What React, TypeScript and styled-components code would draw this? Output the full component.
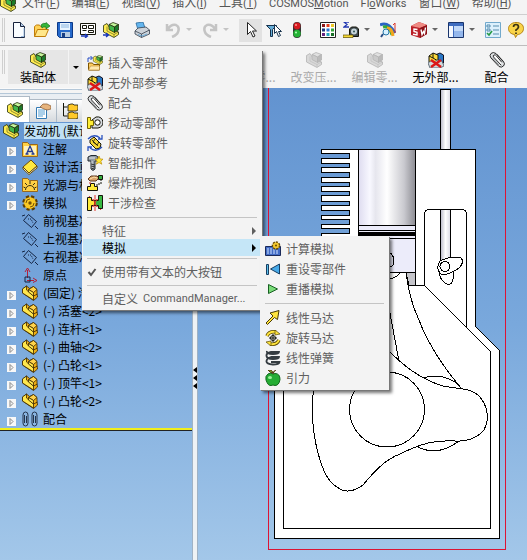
import React from 'react';
import styled, { createGlobalStyle } from 'styled-components';

const GlobalStyle = createGlobalStyle`
  * { box-sizing: border-box; }
  html, body { margin: 0; }
  body, button {
    font: 12px/16px "Noto Sans CJK SC", "Noto Sans", sans-serif;
    color: #000;
  }
  button { margin: 0; padding: 0; border: 0; background: none; white-space: nowrap; }
  svg { display: block; flex: none; }
`;

/* ---------- icons ---------- */

const K = '#15150a';
const Y = '#ffec50';
const G = '#43b84a';

function Block({ body = Y, cube = G, light = '#c4f59c', line = '#26300c', dark = '#1b7a2a' }: { body?: string; cube?: string; light?: string; line?: string; dark?: string }) {
  return (
    <g stroke={line} strokeWidth=".8" strokeLinejoin="round">
      <path d="M.5 3.500L4 1.500l2.500 4 9 4.500v2.500L11 15.500.5 10z" fill={body} />
      <path d="M4 4.500v4.500l7 3.500v2.500M11 12.500l4.500-2.500" fill="none" strokeWidth=".5" />
      <path d="M6 2.500l4-2 5.500 2-4 2.500z" fill={light} />
      <path d="M6 2.500l5.500 2.500v5.500L6 7.500z" fill={cube} />
      <path d="M11.500 5l4-2.500V8l-4 2.500z" fill={dark} />
    </g>
  );
}

const art: Record<string, React.ReactNode> = {
  assembly: <Block />,
  part: (
    <g stroke="#3a2600" strokeWidth=".8" strokeLinejoin="round">
      <path d="M.5 4l4-3 3 2.500 4-2 3.500 3v4l.5 3.500-4 3.500L.5 8z" fill="#efae14" />
      <path d="M.5 4L4.500 1v4l7 6v4L.5 8z" fill="#ffe74d" />
      <path d="M6.500 4.500l5-3 3.500 3-3.500 3z" fill="#ffd34a" />
      <path d="M6.500 4.500V7l5 4V7.500z" fill="#ffe74d" />
      <path d="M11.500 11l4-2" fill="none" />
    </g>
  ),
  ghost: <Block body="#d8d8d8" cube="#cacaca" light="#e0e0e0" line="#b4b4b4" dark="#bababa" />,
  newDoc: (
    <g>
      <path d="M2.500.5h7l4 4v11h-11z" fill="#fafdff" stroke="#17223c" />
      <path d="M9.500.5v4h4" fill="#b4cce8" stroke="#17223c" />
      <path d="M10 14.500h3V6" stroke="#9cbce0" fill="none" />
    </g>
  ),
  open: (
    <g strokeLinejoin="round">
      <path d="M.5 14.500v-10l2-1.500h3l1 1.500h6v3" fill="#ffd257" stroke="#c07d08" />
      <path d="M.5 14.500l3-7h11l-3 7z" fill="#ffe78a" stroke="#c07d08" />
      <path d="M7 3q2-2.500 5-1.500V.5L16 4l-4 3V5q-3-.5-4 1z" fill="#35b63b" stroke="#16751d" strokeWidth=".7" />
    </g>
  ),
  save: (
    <g>
      <path d="M.5.5h15v15h-13l-2-2z" fill="#2569cb" stroke="#0b3886" />
      <path d="M3 1h10v7H3z" fill="#e9f4ff" />
      <path d="M4 3h8M4 5h8" stroke="#8cb6e0" />
      <path d="M4 10h9v5H4z" fill="#b7cce4" />
      <path d="M5 11h3v4H5z" fill="#173d84" />
    </g>
  ),
  drawing: (
    <g fill="none" stroke={K}>
      <path d="M.5 1.500h15v11H.5z" fill="#fff" />
      <path d="M2.500 3.500h4v3h-4zM8.500 3.500h5v3h-5zM2.500 8.500h4M8.500 8.500h5v2h-5z" />
      <path d="M1 14h6M5 12l2.500 2L5 16" stroke="#1735b8" strokeWidth="1.300" />
    </g>
  ),
  assemblyFrom: (
    <g>
      <Block />
      <path d="M0 13h5M3 11l2.500 2L3 15" stroke="#1735b8" strokeWidth="1.300" fill="none" />
    </g>
  ),
  print: (
    <g stroke="#35404e" strokeWidth=".8" strokeLinejoin="round">
      <path d="M2 1l7-1 2 6-7 2z" fill="#63b5ee" stroke="#2a6799" />
      <path d="M1 9l3-3 8-1 3.500 3v4l-8 3.500L1 12z" fill="#ccd2d9" />
      <path d="M1 9l6.500 3 8-4M7.500 12v3.500" fill="none" />
      <path d="M4 12.500l4 1.500 5-2" stroke="#58a4d9" fill="none" />
    </g>
  ),
  undo: <path d="M2 2v6h6M3 7q3-5 8-4 4 2 2 7-1 3-6 5" fill="none" stroke="#c4c4c4" strokeWidth="2.500" />,
  redo: <path d="M14 2v6H8M13 7Q10 2 5 3 1 5 3 10q1 3 6 5" fill="none" stroke="#c4c4c4" strokeWidth="2.500" />,
  cursor: <path d="M4.500.5v12l3-3 2.500 5.500 2-1-2.500-5h4z" fill="#fff" stroke="#222" />,
  filter: (
    <g stroke="#17324c">
      <path d="M.5 3.500h10l-4 4v7h-2v-7z" fill="#65add8" />
      <path d="M8.500 2.500v9l2-2 2 5 2-1-2-4h3z" fill="#fff" />
    </g>
  ),
  traffic: (
    <g>
      <rect x="4" y="0" width="8" height="16" rx="4" fill="#343434" />
      <circle cx="8" cy="4" r="3.400" fill="#d71920" /><circle cx="7" cy="3" r="1" fill="#ff9a8d" />
      <circle cx="8" cy="11.500" r="3.700" fill="#24b235" /><circle cx="7" cy="10.500" r="1" fill="#b4ffb8" />
    </g>
  ),
  palette: (
    <g>
      <path d="M.5.5h15v15H.5z" fill="#fff" stroke="#222" />
      <path d="M2 2h3v3H2z" fill="#8d1818" /><path d="M6.500 2h3v3h-3z" fill="#e33e1c" /><path d="M11 2h3v3h-3z" fill="#efc825" />
      <path d="M2 6.500h3v3H2z" fill="#1b377d" /><path d="M6.500 6.500h3v3h-3z" fill="#2873ce" /><path d="M11 6.500h3v3h-3z" fill="#33a43b" />
      <path d="M2 11h3v3H2z" fill="#652180" /><path d="M6.500 11h3v3h-3z" fill="#21a2bb" /><path d="M11 11h3v3h-3z" fill="#187027" />
    </g>
  ),
  measure: (
    <g>
      <path d="M6 0H1l3 2.500L1 5h5" fill="none" stroke="#2339b2" strokeWidth="1.300" />
      <path d="M6.500 14.500V7l2-2h5l2 2v7.500z" fill="#3e4a4e" stroke={K} />
      <circle cx="11" cy="9.500" r="3" fill="#c7d5da" /><circle cx="11" cy="9.500" r="1" fill="#355" />
      <path d="M0 13h10v2.500H0z" fill="#f6da38" stroke="#5b4b00" strokeWidth=".7" />
    </g>
  ),
  check: (
    <g fill="none">
      <path d="M0 3q8-4 15 8" stroke="#2b65c4" strokeWidth="3" />
      <path d="M3 5q7-2 9 8" stroke="#33aa3a" strokeWidth="3" />
      <path d="M7 6q5 0 6 8" stroke="#f1a51d" strokeWidth="3" />
      <path d="M15 1v10M13 3l2-2" stroke="#d7352b" />
      <circle cx="6" cy="10" r="3" fill="#d8f1ff" stroke="#2777a9" />
      <path d="M3 12l-2 3" stroke="#284c83" strokeWidth="2" />
    </g>
  ),
  sw: (
    <g>
      <path d="M0 4l8-4 8 3v9l-7 4-9-3z" fill="#b91e26" />
      <path d="M0 4l8-4 8 3-7 3z" fill="#ef8a83" />
      <path d="M9 6l7-3v9l-7 4z" fill="#8d1016" />
      <path d="M6.500 7.500L3 7v2.500l3 .8V13l-4-.7M10 7.500l1 5 1.500-3 1 2 1-6" fill="none" stroke="#fff" strokeWidth="1.400" />
    </g>
  ),
  panel: (
    <g>
      <path d="M.5.5h15v15H.5z" fill="#c2d9f8" stroke="#19346c" />
      <path d="M1 1h14v3H1z" fill="#3f6dc0" /><path d="M1 4h4v11H1z" fill="#f4f8ff" />
      <path d="M5.500 4v11" stroke="#3f6dc0" /><path d="M6 9h9v6H6z" fill="#94b7ec" />
    </g>
  ),
  list: (
    <g fill="none">
      <path d="M.5.5h15v15H.5z" fill="#dcf0fc" stroke="#72a9cc" />
      <path d="M2 3h3v2H2zM2 7h3v2H2z" stroke="#548bad" /><path d="M8 4h6M8 8h6M8 12h6" stroke="#568dac" />
      <path d="M2 11l2 2 3-4" stroke="#269a45" strokeWidth="1.600" />
    </g>
  ),
  help: (
    <g>
      <path d="M8 .5c5 0 7.500 2.500 7.500 6s-3 6-6 6l-2 3-1-3c-4-.5-6-3-6-6s3-6 7.500-6z" fill="#f9d449" stroke="#b58311" />
      <path d="M5.500 5q0-2.500 2.500-2.500T10.500 5Q10 7 8 8v1M8 10.500V12" fill="none" stroke="#3b3212" strokeWidth="1.700" />
    </g>
  ),
  insert: (
    <g>
      <path d="M1 7V3h4M3.500 1l2 2-2 2" stroke="#244bc3" fill="none" />
      <g transform="translate(6 0) scale(.62)"><Block /></g>
      <path d="M1.500 15V8h4l1 1.500h6V15z" fill="#ffcf63" stroke="#7e5500" />
      <path d="M1.500 15l2-4h9v4z" fill="#ffe9ae" stroke="#b88630" strokeWidth=".6" />
    </g>
  ),
  external: (
    <g>
      <path d="M7 3l5-2 3.500 2v8L11 14z" fill="#2977c5" stroke="#112" />
      <path d="M1 4l4-3 5 2v8l-5 2-4-3z" fill="#fcdb3d" stroke={K} />
      <path d="M5 1v5l5 3M1 4l4 2" stroke={K} fill="none" />
      <path d="M0 11l4-3 2 2 3-2 5 1 2 5-4 2H2z" fill="#d2d8dc" stroke="#304250" strokeWidth=".7" />
      <path d="M3 8l10 7M13 8L3 15" stroke="#dc1717" strokeWidth="2.500" />
    </g>
  ),
  clip: (
    <g fill="none" stroke="#2c2c2c" strokeLinecap="round">
      <path d="M14 9.500L7 1.500Q4-.5 2 1.500T2 6l8 8.500q2.500 1.500 4.500-.5t0-4.500L8 2.500" fill="#e0e3e5" />
      <path d="M12 13L4.500 5Q3.500 3.500 5 3t2.500 1l5 6" fill="#fff" />
      <path d="M9.500 12.500L3.500 6" stroke="#8b8f92" />
    </g>
  ),
  move: (
    <g stroke={K}>
      <path d="M5 5l4-3q6-1 7 5 0 5-5 6H5z" fill="#d5d9de" />
      <circle cx="10.500" cy="7.500" r="2.700" fill="#fff" />
      <path d="M.5 2.500h3v3h3v5h-3v3h-3z" fill="#ffee35" stroke="#756500" />
    </g>
  ),
  rotate: (
    <g>
      <path d="M3 5l4-3 7 7-1 4-4 1-6-6z" fill="#f6d636" stroke={K} /><path d="M5 5l6 6M8 4L6 7l4 3 2-3" fill="none" stroke={K} strokeWidth=".8" />
      <path d="M1 4q6-6 12-1M15 0v4h-4M15 12q-6 6-12 1M1 16v-4h4" fill="none" stroke="#2952be" strokeWidth="1.300" />
    </g>
  ),
  fastener: (
    <g>
      <path d="M1 2l3-1.500h5l2 1.500v4H8v8l-2 1.500L4 14V6H1z" fill="#929ba4" stroke="#222b33" />
      <path d="M5 6v8M2 3h6" stroke="#e4e8eb" /><path d="M4 9l4 1M4 11l4 1M4 13l3 1" stroke="#333" />
      <path d="M12 1l1.200 3 2.800.2-2.200 2 1 3L12 7.500l-2.600 1.700.8-3L8 4.200l2.800-.2z" fill="#ffe936" stroke="#bd8b00" strokeWidth=".7" />
    </g>
  ),
  explode: (
    <g>
      <path d="M1 4l3-3h6l2 2-3 3H3z" fill="#d9a268" stroke="#5d391e" />
      <path d="M3 4l4-2 3 1" fill="none" stroke="#ffe2ac" />
      <path d="M11.500.5h4v4h-4z" fill="#36ad3e" stroke={K} />
      <path d="M14 4v5h-4v3" stroke={K} strokeDasharray="2 1" fill="none" />
      <path d="M.5 15.500v-4h3v-3h4v3h3v4z" fill="#ffea38" stroke={K} />
      <path d="M3 7v2" stroke="#d42b24" />
    </g>
  ),
  interference: (
    <g>
      <path d="M2 1l12 14M14 1L2 15M8 0v16" stroke="#e5362b" />
      <path d="M.5 2.500h4v3h4v5h-4v5h-4z" fill="#ffeb39" stroke={K} />
      <path d="M15.500.5h-4v5h-4v5h4v3h4z" fill="#38b842" stroke={K} />
      <path d="M6 4l4 8M10 4l-4 8" stroke="#e5362b" />
    </g>
  ),
  property: (
    <g>
      <path d="M1.500 4.500h10v11h-10z" fill="#fff" stroke="#337ab4" /><path d="M3 7h7M3 9h7M3 11h7M3 13h5" stroke="#57a0d4" />
      <path d="M5 4l3-3h4l4 2v3l-4 1-3-1z" fill="#e7b47d" stroke="#85552b" strokeWidth=".7" />
    </g>
  ),
  config: (
    <g>
      <path d="M1.500 0v13h4M1.500 4h4" fill="none" stroke={K} />
      <path d="M6 2l3-1h2l1 1h4v5l-2 1H6zM6 10l3-1h2l1 1h4v5l-2 1H6z" fill="#ffc929" stroke={K} strokeWidth=".8" />
    </g>
  ),
  notes: (
    <g>
      <path d="M.5 15.500v-14h5l2 2h8v12z" fill="#ffd044" stroke="#98681c" /><path d="M2 5h12v9H2z" fill="#fff2bd" />
      <path d="M4.500 13L8 5l3.500 8M6 10.500h4M3.500 13h3M9.500 13h3" fill="none" stroke="#223a91" strokeWidth="1.300" />
    </g>
  ),
  binder: <g stroke="#6c4c05"><path d="M1 8l8-7 6 6-8 7z" fill="#ffe83f" /><path d="M1 8v2l6 5.500L15 9V7l-8 7z" fill="#fffbe4" /></g>,
  lights: (
    <g>
      <path d="M.5 14.500v-13h5l2 2h8v11z" fill="#ffd044" stroke="#98681c" />
      <path d="M3.500 13a4.500 4.500 0 019 0M8 4v3M3 6l2 2M13 6l-2 2M1.500 10l2 1M14.500 10l-2 1" fill="none" stroke="#332d16" />
    </g>
  ),
  gear: (
    <g>
      <circle cx="8" cy="8" r="6.300" fill="#e6ad17" stroke="#5a3c03" strokeWidth="3" strokeDasharray="3 2" />
      <circle cx="8" cy="8" r="5.800" fill="#fac923" /><path d="M4 8q0-4 4-4M12 8q0 4-4 4" stroke="#785309" fill="none" />
      <circle cx="8" cy="8" r="1.700" fill="#735007" />
    </g>
  ),
  plane: <g fill="none" stroke="#142443"><path d="M1.500 7.500l5-6 8 7-5 6zM0 3l3-1M13 13l3 3" /><path d="M6 6h3l2 4" strokeDasharray="1 1" /></g>,
  origin: <g fill="none" stroke="#b51e36"><path d="M5.500 3v8M3 5l2.500-4L8 5" /><path d="M5 13.500h7M11 11l4 2.500-4 2" /><path d="M3 10h5v5H3z" stroke="#142443" /></g>,
  mates: (
    <g fill="none" stroke="#24354d">
      <path d="M6 4v8q0 3-2.500 3T1 12V4q0-3 2.500-3T6 4zM4.500 5v7M2.500 12V4M15 4v8q0 3-2.500 3T10 12V4q0-3 2.500-3T15 4zM13.500 5v7M11.500 12V4" />
    </g>
  ),
  calculate: (
    <g>
      <path d="M.5 5.500h15v9h-15z" fill="#426bc5" stroke="#1a2958" /><path d="M2 8h8M2 10h12M2 12h12" stroke="#d0e4ff" strokeDasharray="2 1" />
      <circle cx="11" cy="4.500" r="3.300" fill="#f4c92f" stroke="#6a4c00" strokeWidth="2" strokeDasharray="2 1" />
      <circle cx="11" cy="4.500" r="2.800" fill="#f4c92f" /><circle cx="11" cy="4.500" r="1" fill="#6a4c00" />
    </g>
  ),
  reset: <g stroke="#173e63"><path d="M1.500 3.500h2v10h-2z" fill="#5bc0ea" /><path d="M14.500 3v10l-9-5z" fill="#46a9e8" /></g>,
  play: <path d="M3.500 3.500v9l9-4.500z" fill="#7adc78" stroke="#175f22" />,
  linearMotor: <path d="M1 13l7-7-3-3 9-2.500-1.500 9-3-2-7 7z" fill="#ffe43c" stroke="#493a04" strokeLinejoin="round" />,
  rotaryMotor: (
    <g fill="none">
      <path d="M2 6q2-5 9-4M14 10q-2 5-9 4" stroke="#5b4a00" strokeWidth="3.500" />
      <path d="M2 6q2-5 9-4M14 10q-2 5-9 4" stroke="#ffe43c" strokeWidth="2" />
      <path d="M10 0l5 4-5 1zM6 16l-5-4 5-1z" fill="#ffe43c" stroke="#5b4a00" strokeWidth=".7" />
      <circle cx="8" cy="8" r="2.500" fill="#fff" stroke={K} /><path d="M8 4v8M4 8h8" stroke={K} />
    </g>
  ),
  spring: (
    <g fill="none" stroke="#343b40" strokeWidth="1.800">
      <path d="M2 1q-1 3 6 3 6 0 6-2H6Q1 3 1.500 6T8 9q6 0 6-2H6q-4 1-4.500 4T8 14.500q6 0 6.500-2.500H6" />
    </g>
  ),
  apple: (
    <g>
      <path d="M8 4q-2-2-5 0Q0 6 1 10q2 6 5 5.500 2-1 4 0 4 0 5-6 0-6-5-6z" fill="#25ad34" stroke="#12681d" />
      <path d="M8 4q0-3 3-4M8 3Q5 3 3 0q4-1 5 3z" fill="#7b9d24" stroke="#553715" />
      <ellipse cx="5" cy="7.500" rx="2" ry="1.500" fill="#a0f39c" />
    </g>
  ),
};

const Icon = ({ name }: { name: string }) => (
  <svg width="16" height="16" viewBox="0 0 16 16" aria-hidden="true">{art[name]}</svg>
);

const Caret = ({ side }: { side?: boolean }) => (
  <svg width="6" height="8" viewBox="0 0 6 8" fill="currentColor" aria-hidden="true">
    <path d={side ? 'M1 0l4 4-4 4z' : 'M0 2h6L3 5z'} />
  </svg>
);

/* ---------- bars ---------- */

const Page = styled.div`
  position: relative;
  display: flex;
  flex-direction: column;
  min-height: 100vh;
  overflow: hidden;
  background: #f4f4f4;
`;

const Latin = styled.span`
  font-family: Roboto, sans-serif;
  font-size: 11px;
`;

const MenuBar = styled.nav`
  display: flex;
  align-items: flex-end;
  gap: 12px;
  height: 15px;
  padding-bottom: 2px;
  overflow: hidden;
  border-bottom: 1px solid #cfcfcf;
  & > svg { margin-right: -6px; }
`;

const MenuName = styled.button`
  flex: none;
  color: #555;
`;

const ToolBar = styled.div`
  display: flex;
  align-items: center;
  height: 31px;
  padding-left: 2px;
  border-bottom: 1px solid #bdbdbd;
`;

const Grip = styled.span`
  flex: none;
  width: 3px;
  height: 24px;
  margin-right: 2px;
  border: solid #cfcfcf;
  border-width: 0 1px;
`;

const ToolGroup = styled.div<{ $near?: boolean }>`
  display: flex;
  flex: none;
  margin-right: ${p => (p.$near ? 4 : 8)}px;
`;

const ToolButton = styled.button<{ $on?: boolean }>`
  display: grid;
  place-items: center;
  width: 23px;
  height: 23px;
  background: ${p => (p.$on ? '#e2e2e2' : 'none')};
`;

const DropButton = styled.button<{ $dim?: boolean }>`
  display: grid;
  place-items: center;
  width: 10px;
  color: ${p => (p.$dim ? '#c4c4c4' : '#666')};
`;

const CommandBar = styled.div`
  display: flex;
  height: 42px;
  padding: 4px 0 4px 2px;
`;

const CommandMain = styled.div`
  display: flex;
  flex: none;
  gap: 1px;
  margin-left: 1px;
`;

const CommandFace = styled.button<{ $width: number; $flat?: boolean }>`
  display: flex;
  flex-direction: column;
  align-items: center;
  justify-content: center;
  gap: 1px;
  flex: none;
  width: ${p => p.$width}px;
  padding-top: 2px;
  background: ${p => (p.$flat ? 'none' : '#e6e6e6')};
  &:disabled { color: #aaa; }
`;

const CommandList = styled.div`
  display: flex;
  flex: none;
  margin-left: auto;
`;

/* ---------- work area ---------- */

const Main = styled.main`
  display: flex;
  flex: 1;
  background: linear-gradient(#6293d0, #79a8dc 50%, #a3c7e9);
`;

const Side = styled.aside`
  flex: none;
  width: 192px;
`;

const Tabs = styled.div`
  display: flex;
  align-items: flex-end;
  height: 34px;
  padding-top: 8px;
  background: linear-gradient(#fafafa 1px, #b4c7d8 1px, #b4c7d8 2px, #f4f4f4 2px, #f4f4f4 5px, #b4c7d8 5px, #b4c7d8 6px, #e9eef3 6px);
`;

const Tab = styled.button<{ $on?: boolean }>`
  display: grid;
  place-items: center;
  width: ${p => (p.$on ? 30 : 27)}px;
  height: ${p => (p.$on ? 26 : 23)}px;
  border: solid #aebac6;
  border-width: 1px 1px 0 0;
  background: ${p => (p.$on ? '#fff' : 'linear-gradient(#fff, #d5d9dd)')};
`;

const Tree = styled.ul`
  margin: 0;
  padding: 0;
  list-style: none;
  border-bottom: 2px solid #f1ee1b;
  box-shadow: 0 1px #222;
`;

const Node = styled.li<{ $root?: boolean }>`
  display: flex;
  align-items: center;
  gap: 5px;
  height: 18px;
  padding-left: ${p => (p.$root ? 3 : 7)}px;
  white-space: nowrap;
`;

const NodeName = styled.span<{ $on?: boolean }>`
  flex: ${p => (p.$on ? 1 : 'none')};
  background: ${p => (p.$on ? '#bfe0f6' : 'none')};
`;

const Expander = styled.button<{ $none?: boolean }>`
  display: grid;
  place-items: center;
  visibility: ${p => (p.$none ? 'hidden' : 'visible')};
  width: 9px;
  height: 9px;
  margin: 4px 1px 0 0;
  background: #f8f8f8;
  color: #888;
`;

const Splitter = styled.div`
  display: flex;
  flex: none;
  flex-direction: column;
  justify-content: center;
  align-items: center;
  width: 6px;
  padding-top: 108px;
  border: solid #9fb2c5;
  border-width: 0 1px;
  background: #eef2f5;
`;

const Viewport = styled.section`
  flex: 1;
  min-width: 0;
  overflow: hidden;
`;

/* ---------- menus ---------- */

const Menu = styled.div<{ $sub?: boolean }>`
  position: absolute;
  left: ${p => (p.$sub ? 260 : 82)}px;
  top: ${p => (p.$sub ? 236 : 50)}px;
  width: ${p => (p.$sub ? 129 : 180)}px;
  padding: ${p => (p.$sub ? '3px 1px 2px' : '3px 1px 0')};
  background: #f3f3f3;
  box-shadow: 1px 1px 0 #777, 3px 3px 3px #0008;
`;

const Item = styled.button<{ $size?: 'short' | 'tall'; $plain?: boolean; $on?: boolean }>`
  display: flex;
  align-items: center;
  gap: 5px;
  width: 100%;
  height: ${p => (p.$size === 'short' ? 17 : p.$size === 'tall' ? 22 : 20)}px;
  padding: 0 4px 0 ${p => (p.$plain ? 19 : 4)}px;
  color: ${p => (p.$on ? '#000' : '#5f5f5f')};
  background: ${p => (p.$on ? '#c5e6f7' : 'none')};
  & > svg { margin-left: ${p => (p.$plain ? 'auto' : '0')}; }
`;

const Rule = styled.hr<{ $wide?: boolean }>`
  height: 1px;
  margin: ${p => (p.$wide ? '4px 4px' : '2px 4px')};
  border: 0;
  background: #c4c4c4;
`;

/* ---------- engine drawing ---------- */

const finGaps = [[153, 158], [163, 167], [172, 177], [182, 186], [191, 195], [201, 205], [210, 215], [219, 224], [228, 233]];
const finEdge = finGaps.map(([a, b]) => `V${a}.5H349.5V${b}.5H321.5`).join('');

const Engine = () => (
  <svg width="329" height="472" viewBox="198 88 329 472" role="img" aria-label="发动机">
    <defs>
      <linearGradient id="bore">
        <stop offset="0" stopColor="#dedcf0" /><stop offset=".2" stopColor="#f8f8ff" />
        <stop offset=".3" stopColor="#e6e6ee" /><stop offset=".5" stopColor="#fff" />
        <stop offset=".8" stopColor="#c9c9cf" /><stop offset="1" stopColor="#8c8c93" />
      </linearGradient>
      <linearGradient id="rod">
        <stop offset="0" stopColor="#b9b9c8" /><stop offset=".5" stopColor="#fff" /><stop offset="1" stopColor="#dcdce6" />
      </linearGradient>
    </defs>
    <g fill="none" stroke="#000" shapeRendering="crispEdges">
      <path d="M268.500 88V549.500H505.500V88" stroke="#dc1434" />
      <path d="M440.500 149V89.500h10V149" fill="url(#rod)" />
      <path d={`M321.500 149.500${finEdge}V240L274.500 300V538.500H499.500V350.500L475.500 326.500V149.500z`} fill="#fff" />
      <path d="M283.500 380V528.500H490.500V351.500L425 286" />
      <path d="M358.500 149.500h57v76h-57z" fill="url(#bore)" />
      <path d="M358.500 225.500h57v47h-57z" fill="#ececfa" />
      <path d="M359 230.500h56M359 232.500h56M359 235.500h56M359 238.500h56" />
      <path d="M359 234h56" strokeWidth="2" />
      <path d="M406 272.500h9.500v13H409z" fill="#c4c4ca" />
      <path d="M415.500 225v60.500h9V214q0-4.500 5-4.500h32q5 0 5 5V327" />
      <path d="M440.500 209.500h10V260h-10z" fill="url(#rod)" />
      <path d="M439 274q3 9 10 11 5-2 5-14l-8-6z" fill="#fff" />
      <path d="M440 261q13-6 21-3 4 4-2 10-11 8-18 6-6-5-1-13z" fill="#fff" />
      <circle cx="445" cy="266.500" r="5" fill="#fff" />
      <path d="M377 252h12q5 3 5 9t-5 6M385 279q10 1 16-7" />
      <path d="M406 272Q409 299 419 320 431 352 461 388M389 308L395 340 399 361" />
      <path d="M314 385Q309 425 320 460 327 482 337 487 348 496 363 485C378 467 387 459 400 454 422 443 435 440 455 441 470 442 478 437 484 430 491 416 486 403 478 395 470 388 458 389 443 386 420 379 404 366 389 351" />
      <path d="M423 378q20-6 36 7M418 447q20 10 41-6" />
      <circle cx="387" cy="409.500" r="37.500" />
    </g>
  </svg>
);

/* ---------- data ---------- */

type MenuTitle = { text?: string; before?: string; key: string; after?: string };
const menus: MenuTitle[] = [
  { text: '文件', before: '(', key: 'F', after: ')' },
  { text: '编辑', before: '(', key: 'E', after: ')' },
  { text: '视图', before: '(', key: 'V', after: ')' },
  { text: '插入', before: '(', key: 'I', after: ')' },
  { text: '工具', before: '(', key: 'T', after: ')' },
  { before: 'COSMOS', key: 'M', after: 'otion' },
  { before: 'Fl', key: 'o', after: 'Works' },
  { text: '窗口', before: '(', key: 'W', after: ')' },
  { text: '帮助', before: '(', key: 'H', after: ')' },
];

type Group = { icons: string[]; drop?: 'on' | 'dim'; near?: boolean };
const tools: Group[] = [
  { icons: ['newDoc', 'open', 'save', 'drawing', 'assemblyFrom'] },
  { icons: ['print'] },
  { icons: ['undo'], drop: 'dim', near: true },
  { icons: ['redo'], drop: 'dim' },
  { icons: ['cursor', 'filter', 'traffic'] },
  { icons: ['palette', 'measure'], drop: 'on', near: true },
  { icons: ['check'] },
  { icons: ['sw'], drop: 'on', near: true },
  { icons: ['panel'], drop: 'on', near: true },
  { icons: ['list', 'help'] },
];

const commands = [
  { label: '移动零...', icon: 'ghost', off: true },
  { label: '改变压...', icon: 'ghost', off: true },
  { label: '编辑零...', icon: 'ghost', off: true },
  { label: '无外部...', icon: 'external' },
  { label: '配合', icon: 'clip' },
];

const nodes: [string, string, boolean?][] = [
  ['notes', '注解'], ['binder', '设计活页夹'], ['lights', '光源与相机'], ['gear', '模拟'],
  ['plane', '前视基准面', true], ['plane', '上视基准面', true], ['plane', '右视基准面', true], ['origin', '原点', true],
  ['part', '(固定) 汽缸<1>'], ['part', '(-) 活塞<2>'], ['part', '(-) 连杆<1>'], ['part', '(-) 曲轴<2>'],
  ['part', '(-) 凸轮<1>'], ['part', '(-) 顶竿<1>'], ['part', '(-) 凸轮<2>'], ['mates', '配合'],
];

const assemblyItems = [
  ['insert', '插入零部件'], ['external', '无外部参考'], ['clip', '配合'], ['move', '移动零部件'],
  ['rotate', '旋转零部件'], ['fastener', '智能扣件'], ['explode', '爆炸视图'], ['interference', '干涉检查'],
];

const playItems = [['calculate', '计算模拟'], ['reset', '重设零部件'], ['play', '重播模拟']];
const forceItems = [['linearMotor', '线性马达'], ['rotaryMotor', '旋转马达'], ['spring', '线性弹簧'], ['apple', '引力']];

const items = (list: string[][]) =>
  list.map(([icon, label]) => <Item key={label} role="menuitem"><Icon name={icon} />{label}</Item>);

export default function App() {
  return (
    <Page>
      <GlobalStyle />
      <MenuBar>
        <Icon name="assembly" />
        {menus.map(m => (
          <MenuName key={m.key}>{m.text}<Latin>{m.before}<u>{m.key}</u>{m.after}</Latin></MenuName>
        ))}
      </MenuBar>
      <ToolBar>
        <Grip />
        {tools.map(g => (
          <ToolGroup key={g.icons[0]} $near={g.near}>
            {g.icons.map(i => <ToolButton key={i} $on={i === 'cursor'} aria-label={i}><Icon name={i} /></ToolButton>)}
            {g.drop && <DropButton $dim={g.drop === 'dim'} aria-label="more"><Caret /></DropButton>}
          </ToolGroup>
        ))}
      </ToolBar>
      <CommandBar>
        <Grip />
        <CommandMain>
          <CommandFace $width={60}><Icon name="assembly" />装配体</CommandFace>
          <CommandFace $width={14} aria-label="装配体菜单"><Caret /></CommandFace>
        </CommandMain>
        <CommandList>
          {commands.map(c => (
            <CommandFace key={c.label} $width={61} $flat disabled={c.off}><Icon name={c.icon} />{c.label}</CommandFace>
          ))}
        </CommandList>
      </CommandBar>
      <Main>
        <Side>
          <Tabs role="tablist">
            <Tab role="tab" $on aria-label="设计树"><Icon name="assembly" /></Tab>
            <Tab role="tab" aria-label="属性"><Icon name="property" /></Tab>
            <Tab role="tab" aria-label="配置"><Icon name="config" /></Tab>
          </Tabs>
          <Tree>
            <Node $root><Icon name="assembly" /><NodeName $on>发动机 (默认)</NodeName></Node>
            {nodes.map(([icon, label, leaf]) => (
              <Node key={label}>
                <Expander $none={leaf} aria-label={`展开 ${label}`}>
                  <svg width="7" height="7" viewBox="0 0 7 7" aria-hidden="true">
                    <path d="M2 .5l3 3-3 3z" fill="none" stroke="#888" />
                  </svg>
                </Expander>
                <Icon name={icon} />
                <NodeName>{label}</NodeName>
              </Node>
            ))}
          </Tree>
        </Side>
        <Splitter>
          <svg width="4" height="22" viewBox="0 0 4 22" aria-hidden="true"><path d="M4 0v6L0 3zM4 8v6l-4-3zM4 16v6l-4-3z" /></svg>
        </Splitter>
        <Viewport><Engine /></Viewport>
      </Main>
      <Menu role="menu">
        {items(assemblyItems)}
        <Rule $wide />
        <Item role="menuitem" $size="short" $plain>特征<Caret side /></Item>
        <Item role="menuitem" $size="short" $plain $on>模拟<Caret side /></Item>
        <Rule />
        <Item role="menuitemcheckbox" aria-checked="true" $size="tall">
          <svg width="10" height="10" viewBox="0 0 10 10" aria-hidden="true"><path d="M1.500 5l2.500 3 4.500-6" fill="none" stroke="#555" strokeWidth="2" /></svg>
          使用带有文本的大按钮
        </Item>
        <Rule />
        <Item role="menuitem" $size="tall" $plain>自定义<Latin>CommandManager...</Latin></Item>
      </Menu>
      <Menu role="menu" $sub>
        {items(playItems)}
        <Rule $wide />
        {items(forceItems)}
      </Menu>
    </Page>
  );
}
